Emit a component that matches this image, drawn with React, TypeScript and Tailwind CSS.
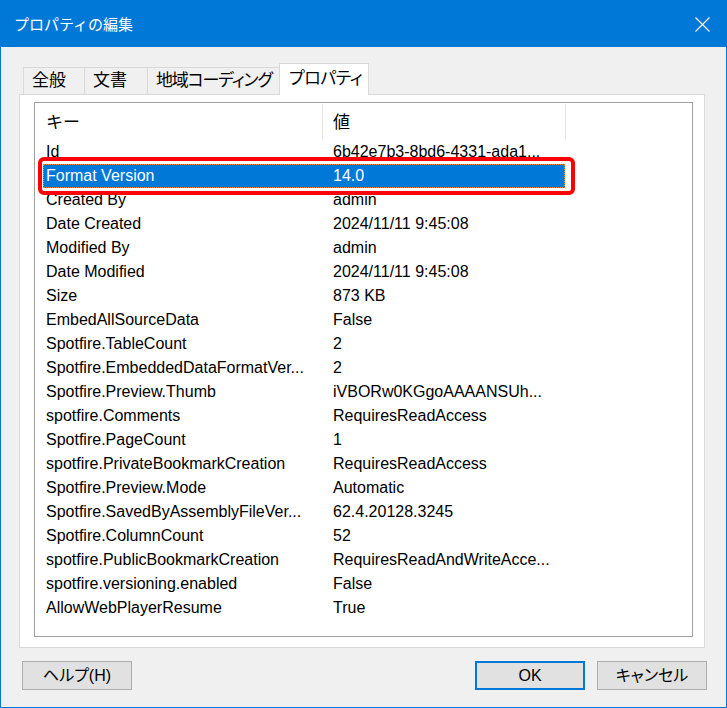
import React from 'react';

const rows: [string, string][] = [
  ['Id', '6b42e7b3-8bd6-4331-ada1...'],
  ['Format Version', '14.0'],
  ['Created By', 'admin'],
  ['Date Created', '2024/11/11 9:45:08'],
  ['Modified By', 'admin'],
  ['Date Modified', '2024/11/11 9:45:08'],
  ['Size', '873 KB'],
  ['EmbedAllSourceData', 'False'],
  ['Spotfire.TableCount', '2'],
  ['Spotfire.EmbeddedDataFormatVer...', '2'],
  ['Spotfire.Preview.Thumb', 'iVBORw0KGgoAAAANSUh...'],
  ['spotfire.Comments', 'RequiresReadAccess'],
  ['Spotfire.PageCount', '1'],
  ['spotfire.PrivateBookmarkCreation', 'RequiresReadAccess'],
  ['Spotfire.Preview.Mode', 'Automatic'],
  ['Spotfire.SavedByAssemblyFileVer...', '62.4.20128.3245'],
  ['Spotfire.ColumnCount', '52'],
  ['spotfire.PublicBookmarkCreation', 'RequiresReadAndWriteAcce...'],
  ['spotfire.versioning.enabled', 'False'],
  ['AllowWebPlayerResume', 'True'],
];

const SELECTED = 1;

function Tab({ label, className }: { label: string; className: string }) {
  return (
    <div className={`flex items-center pl-[8px] bg-[#f0f0f0] border-[#d9d9d9] text-[17px] whitespace-nowrap [font-feature-settings:'palt'] ${className}`}>
      {label}
    </div>
  );
}

function DialogButton({ label, primary }: { label: string; primary?: boolean }) {
  return (
    <div
      className={`w-[110px] h-[29px] flex items-center justify-center bg-[#e1e1e1] text-[16px] [font-feature-settings:'palt'] ${
        primary ? 'border-2 border-[#0078d7]' : 'border border-[#adadad]'
      }`}
    >
      {label}
    </div>
  );
}

export default function App() {
  return (
    <div className="w-[727px] h-[708px] border border-[#0078d7] bg-[#f0f0f0] flex flex-col text-black font-['Liberation_Sans','Noto_Sans_CJK_JP',sans-serif]">
      {/* Title bar */}
      <div className="h-[46px] shrink-0 bg-[#0078d7] flex items-center pl-[13px] pr-[16px]">
        <span className="text-white text-[15px] font-['Noto_Sans_CJK_JP',sans-serif]">プロパティの編集</span>
        <svg className="ml-auto" width="15" height="15" viewBox="0 0 15 15">
          <path d="M0.5 0.5 L14.5 14.5 M14.5 0.5 L0.5 14.5" stroke="#ffffff" strokeWidth="1.1" />
        </svg>
      </div>

      {/* Body */}
      <div className="flex-1 flex flex-col pt-[16px]">
        {/* Tabs */}
        <div className="h-[31px] flex items-end pl-[22px]">
          <Tab label="全般" className="w-[62px] h-[27px] border-l border-t border-r" />
          <Tab label="文書" className="w-[63px] h-[27px] border-t border-r" />
          <Tab label="地域コーディング" className="w-[131px] h-[27px] border-t tracking-[-1.2px]" />
          <div className="relative z-10 -mb-px w-[90px] h-[32px] flex items-center pl-[9px] pb-[2px] bg-white border-l border-t border-r border-[#d9d9d9] text-[17px] tracking-[-0.5px] [font-feature-settings:'palt']">
            プロパティ
          </div>
        </div>

        {/* Tab panel */}
        <div className="ml-[18px] w-[686px] h-[554px] bg-white border border-[#d9d9d9] pl-[14px] pt-[7px]">
          <div className="relative w-[659px] h-[535px] border border-[#a0a0a0] bg-white">
            {/* Header */}
            <div className="h-[37px] flex items-stretch text-[17px]">
              <div className="w-[287px] pl-[11px] pt-[2px] flex items-center">キー</div>
              <div className="w-px my-[1px] bg-[#e5e5e5]" />
              <div className="w-[242px] pl-[10px] pt-[2px] flex items-center">値</div>
              <div className="w-px my-[1px] bg-[#e5e5e5]" />
            </div>

            {/* Rows */}
            {rows.map(([key, value], i) => {
              const selected = i === SELECTED;
              return (
                <div key={key} className="h-[24px] pl-[8px] flex text-[16px]">
                  <div
                    className={`w-[522px] flex items-center border ${
                      selected ? 'bg-[#0078d7] text-white border-dotted border-[#ff8728]' : 'border-transparent'
                    }`}
                  >
                    <div className="w-[278px] pl-[2px] whitespace-nowrap overflow-hidden">{key}</div>
                    <div className="pl-[11px] whitespace-nowrap overflow-hidden">{value}</div>
                  </div>
                </div>
              );
            })}

            {/* Annotation highlight */}
            <div className="absolute left-[3px] top-[54px] w-[537px] h-[38px] border-4 border-[#ff0000] rounded-[6px] pointer-events-none" />
          </div>
        </div>

        {/* Buttons */}
        <div className="mt-[13px] flex items-start pl-[21px] pr-[19px]">
          <DialogButton label="ヘルプ(H)" />
          <div className="ml-auto flex gap-[12px]">
            <DialogButton label="OK" primary />
            <DialogButton label="キャンセル" />
          </div>
        </div>
      </div>
    </div>
  );
}
